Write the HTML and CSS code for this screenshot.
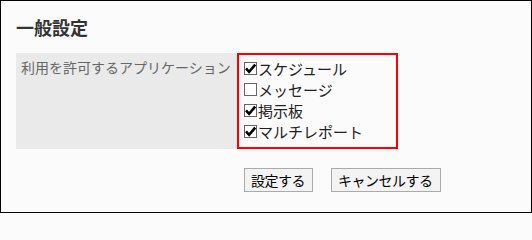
FILE: index.html
```html
<!DOCTYPE html>
<html lang="ja">
<head>
<meta charset="utf-8">
<link rel="stylesheet" href="styles.css">
</head>
<body>
<div class="frame">
  <h1 class="title">一般設定</h1>
  <div class="form-table">
    <div class="label-cell">利用を許可するアプリケーション</div>
    <div class="value-cell">
      <label class="opt"><span class="cb checked"><svg viewBox="0 0 11 11" width="11" height="11"><path d="M1 5.4 L4.1 8.8 L10.2 1.6" fill="none" stroke="#000" stroke-width="2.6"/></svg></span>スケジュール</label>
      <label class="opt"><span class="cb"></span>メッセージ</label>
      <label class="opt"><span class="cb checked"><svg viewBox="0 0 11 11" width="11" height="11"><path d="M1 5.4 L4.1 8.8 L10.2 1.6" fill="none" stroke="#000" stroke-width="2.6"/></svg></span>掲示板</label>
      <label class="opt"><span class="cb checked"><svg viewBox="0 0 11 11" width="11" height="11"><path d="M1 5.4 L4.1 8.8 L10.2 1.6" fill="none" stroke="#000" stroke-width="2.6"/></svg></span>マルチレポート</label>
    </div>
  </div>
  <div class="buttons">
    <button class="btn">設定する</button>
    <button class="btn">キャンセルする</button>
  </div>
</div>
</body>
</html>
```

FILE: styles.css
```css
* { box-sizing: border-box; }
html, body { margin: 0; padding: 0; height: 213px; overflow: hidden; }
body {
  font-family: "Noto Sans CJK JP", "Noto Sans", sans-serif;
  background: #fbfbfb;
}
.frame {
  width: 532px;
  height: 213px;
  border: 1px solid #000;
  background: #fbfbfb;
  padding: 16px 0 0 15px;
}
.title {
  margin: 0;
  font-size: 18px;
  line-height: 20px;
  font-weight: bold;
  color: #333;
}
.form-table {
  display: flex;
  margin-top: 16px;
}
.label-cell {
  width: 221px;
  background: #eaeaea;
  color: #666;
  font-size: 14px;
  line-height: 21px;
  padding: 4px 0 0 5px;
}
.value-cell {
  width: 161px;
  border: 2px solid #f00;
  padding: 3px 0 5px 5px;
  display: flex;
  flex-direction: column;
}
.opt {
  display: flex;
  align-items: center;
  height: 21px;
  font-size: 15px;
  color: #222;
}
.cb {
  width: 13px;
  height: 13px;
  border: 1px solid #666;
  background: #fff;
  margin-right: 1px;
  display: flex;
  align-items: center;
  justify-content: center;
  flex: none;
}
.cb svg { display: block; }
.buttons {
  display: flex;
  gap: 18px;
  margin-top: 19px;
  padding-left: 228px;
}
.btn {
  font-family: "Noto Sans CJK JP", "Noto Sans", sans-serif;
  font-size: 14px;
  letter-spacing: -0.5px;
  height: 24px;
  line-height: 20px;
  padding: 0 7px 0 6px;
  border: 1px solid #aaa;
  background: #f3f3f3;
  color: #000;
  border-radius: 0;
}
```
